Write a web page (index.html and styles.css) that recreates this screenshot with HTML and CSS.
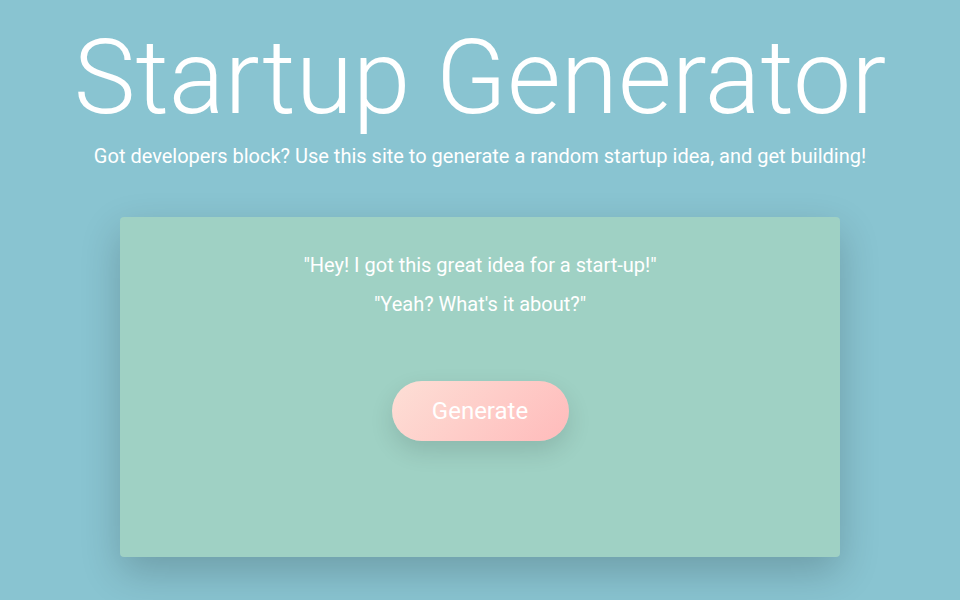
FILE: index.html
```html
<!DOCTYPE html>
<html lang="en">
<head>
<meta charset="utf-8">
<title>Startup Generator</title>
<link rel="stylesheet" href="styles.css">
</head>
<body>
<header class="hero">
  <h1 class="title">Startup Generator</h1>
  <p class="subtitle">Got developers block? Use this site to generate a random startup idea, and get building!</p>
</header>
<main class="card">
  <p class="line">"Hey! I got this great idea for a start-up!"</p>
  <p class="line">"Yeah? What's it about?"</p>
  <button class="generate" type="button">Generate</button>
</main>
</body>
</html>
```
FILE: styles.css
```css
html, body {
  margin: 0;
  padding: 0;
}
body {
  background: #89c4d1;
  font-family: Roboto, "Liberation Sans", sans-serif;
  color: #fff;
  height: 600px;
  overflow: hidden;
  display: flex;
  flex-direction: column;
  align-items: center;
}
.hero {
  text-align: center;
}
.title {
  margin: 18px 0 0;
  font-weight: 300;
  font-size: 104px;
  line-height: 120px;
  letter-spacing: 0;
}
.subtitle {
  margin: 6px 0 0;
  font-size: 20px;
  font-weight: 400;
  line-height: 24px;
}
.card {
  margin-top: 49px;
  width: 720px;
  height: 340px;
  box-sizing: border-box;
  background: #9fd1c4;
  border-radius: 4px;
  box-shadow: 0 15px 40px rgba(0, 0, 0, 0.2);
  display: flex;
  flex-direction: column;
  align-items: center;
  padding-top: 36px;
}
.line {
  margin: 0 0 15px;
  font-size: 20px;
  font-weight: 400;
  line-height: 24px;
}
.generate {
  margin-top: 50px;
  width: 177px;
  height: 60px;
  border: none;
  border-radius: 30px;
  background: linear-gradient(135deg, #fddfd6 0%, #ffbbbb 100%);
  color: #fff;
  font-family: Roboto, "Liberation Sans", sans-serif;
  font-size: 24px;
  font-weight: 400;
  box-shadow: 0 10px 25px rgba(0, 0, 0, 0.12);
}
```
